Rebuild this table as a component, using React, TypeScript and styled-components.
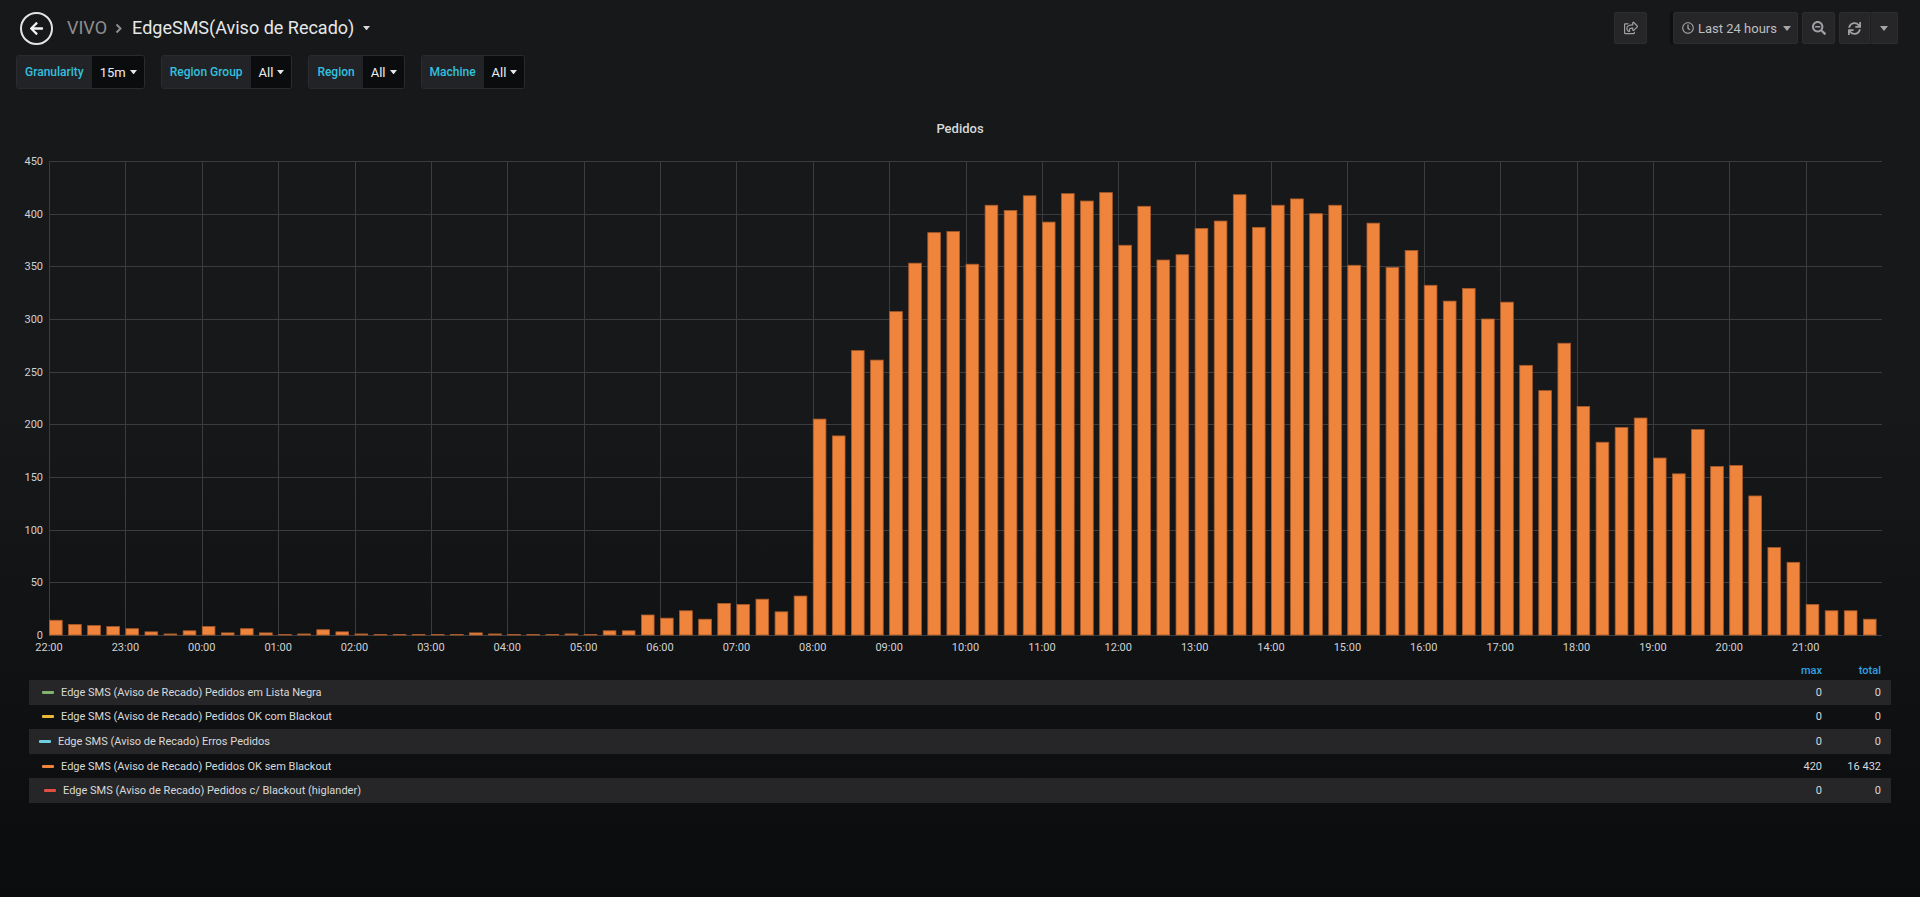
import React from "react";
import styled, { createGlobalStyle } from "styled-components";
import { FaArrowLeft, FaRegShareSquare, FaRegClock, FaSearchMinus, FaSync } from "react-icons/fa";

const GlobalStyle = createGlobalStyle`
  html, body { margin: 0; padding: 0; }
  body {
    min-height: 897px;
    background: linear-gradient(180deg, #17181a 0px, #17181a 400px, #0b0c0e 897px);
    background-repeat: no-repeat;
    background-color: #0b0c0e;
    font-family: Roboto, "Helvetica Neue", Arial, sans-serif;
    color: #d8d9da;
    overflow: hidden;
  }
`;

const Page = styled.div`
  width: 1920px;
  height: 897px;
  display: flex;
  flex-direction: column;
`;

const Navbar = styled.header`
  display: flex;
  align-items: center;
  justify-content: space-between;
  height: 36px;
  padding: 10px 22px 0 20px;
`;

const NavLeft = styled.div`
  display: flex;
  align-items: center;
`;

const BackButton = styled.div`
  width: 29px;
  height: 29px;
  border: 2px solid #e4e4e4;
  border-radius: 50%;
  display: flex;
  align-items: center;
  justify-content: center;
  color: #f2f2f2;
`;

const Breadcrumb = styled.div`
  display: flex;
  align-items: center;
  margin-left: 14px;
  font-size: 18px;
  line-height: 22px;
`;

const Crumb = styled.span`
  color: #8e8e8e;
`;

const CrumbSep = styled.svg`
  width: 7px;
  height: 11px;
  margin: 1px 10px 0 8px;
`;

const DashTitle = styled.span`
  color: #e6e7e8;
`;

const Caret = styled.svg<{ $ml?: number; $w?: number }>`
  flex: none;
  width: ${(p) => p.$w ?? 8}px;
  height: ${(p) => ((p.$w ?? 8) * 5) / 8}px;
  margin-left: ${(p) => p.$ml ?? 5}px;
`;

const NavRight = styled.div`
  display: flex;
  align-items: center;
`;

const NavButton = styled.div<{ $w?: number }>`
  width: ${(p) => p.$w ?? 33}px;
  height: 32px;
  box-sizing: border-box;
  background: #262628;
  border: 1px solid #2c2d30;
  border-radius: 2px;
  display: flex;
  align-items: center;
  justify-content: center;
  color: #9fa0a3;
`;

const ShareButton = styled(NavButton)`
  margin-right: 26px;
`;

const TimePicker = styled(NavButton)`
  width: 125px;
  justify-content: flex-start;
  padding-left: 8px;
  gap: 4px;
  box-shadow: -3px 0 0 0 #0e0f10;
  color: #bdbec0;
  font-size: 13px;
`;

const ButtonGap = styled.div`
  width: 4px;
`;

const SplitGroup = styled.div`
  display: flex;
`;

const SplitButton = styled(NavButton)<{ $left?: boolean }>`
  border-radius: ${(p) => (p.$left ? "2px 0 0 2px" : "0 2px 2px 0")};
  border-left: ${(p) => (p.$left ? "1px solid #2c2d30" : "1px solid #1e1f21")};
`;

const Submenu = styled.div`
  display: flex;
  gap: 16px;
  padding: 9px 16px 0;
`;

const VarBox = styled.div`
  display: flex;
  height: 34px;
  box-sizing: border-box;
  border: 1px solid #2a2b2e;
  border-radius: 3px;
  overflow: hidden;
`;

const VarLabel = styled.div`
  display: flex;
  align-items: center;
  padding: 0 8px;
  background: #222327;
  color: #33c0de;
  font-size: 12px;
  font-weight: 500;
`;

const VarValue = styled.div`
  display: flex;
  align-items: center;
  gap: 4px;
  padding: 0 7px 0 8px;
  background: #0b0c0e;
  color: #eceef0;
  font-size: 13px;
`;

const Panel = styled.section`
  padding: 30px 29px 0;
  display: flex;
  flex-direction: column;
`;

const PanelTitle = styled.div`
  text-align: center;
  font-size: 13px;
  font-weight: 500;
  line-height: 20px;
  color: #d8d9da;
`;

const ChartSvg = styled.svg`
  display: block;
  overflow: visible;
  text {
    font-family: Roboto, "Helvetica Neue", Arial, sans-serif;
    font-size: 11px;
    fill: #d0d1d3;
  }
`;

const Legend = styled.div`
  display: flex;
  flex-direction: column;
  font-size: 11px;
`;

const LegendHeader = styled.div`
  display: flex;
  justify-content: flex-end;
  align-items: center;
  height: 20px;
`;

const HeaderCell = styled.div<{ $last?: boolean }>`
  width: 59px;
  text-align: right;
  padding-right: ${(p) => (p.$last ? 10 : 0)}px;
  color: #2ea3e0;
  font-weight: 500;
`;

const LegendRow = styled.div<{ $odd: boolean }>`
  display: flex;
  align-items: center;
  height: 24.6px;
  background: ${(p) => (p.$odd ? "#262628" : "transparent")};
  color: #d8d9da;
`;

const SeriesName = styled.div<{ $indent: number }>`
  flex: 1;
  display: flex;
  align-items: center;
  padding-left: ${(p) => p.$indent}px;
`;

const Swatch = styled.span<{ $color: string }>`
  width: 12px;
  height: 3px;
  border-radius: 1px;
  background: ${(p) => p.$color};
  margin-right: 7px;
`;

const ValueCell = styled.div<{ $last?: boolean }>`
  width: 59px;
  text-align: right;
  padding-right: ${(p) => (p.$last ? 10 : 0)}px;
`;

const data = [
  14, 10, 9, 8, 6, 3, 1, 4, 8, 2, 6, 2, 0, 1, 5, 3, 1, 0, 0, 0, 0, 0, 2, 1,
  0, 0, 0, 1, 0, 4, 4, 19, 16, 23, 15, 30, 29, 34, 22, 37, 205, 189, 270, 261,
  307, 353, 382, 383, 352, 408, 403, 417, 392, 419, 412, 420, 370, 407, 356, 361,
  386, 393, 418, 387, 408, 414, 400, 408, 351, 391, 349, 365, 332, 317, 329, 300,
  316, 256, 232, 277, 217, 183, 197, 206, 168, 153, 195, 160, 161, 132, 83, 69,
  29, 23, 23, 15,
];

const W = 1862;
const H = 521;
const PL = 20;
const PR = 1853;
const PT = 22;
const PB = 496;
const hourW = (PR - PL) / 24;
const slot = hourW / 4;
const barW = 12.7;
const yUnit = (PB - PT) / 450;

const crisp = (v: number) => Math.round(v) + 0.5;

function Chart() {
  const hours = Array.from({ length: 24 }, (_, h) => h);
  const ticks = Array.from({ length: 10 }, (_, i) => i * 50);
  return (
    <ChartSvg width={W} height={H} viewBox={`0 0 ${W} ${H}`}>
      {ticks.map((v) => {
        const y = crisp(PB - v * yUnit);
        return (
          <g key={`h${v}`}>
            <line x1={PL} x2={PR} y1={y} y2={y} stroke="#3b3c3f" strokeWidth={1} />
            <text x={14} y={y} textAnchor="end" dominantBaseline="central">
              {v}
            </text>
          </g>
        );
      })}
      {hours.map((h) => {
        const x = crisp(PL + h * hourW);
        const label = String((22 + h) % 24).padStart(2, "0") + ":00";
        return (
          <g key={`v${h}`}>
            <line x1={x} x2={x} y1={PT} y2={PB} stroke="#3b3c3f" strokeWidth={1} />
            <text x={PL + h * hourW} y={PB + 12} textAnchor="middle" dominantBaseline="central">
              {label}
            </text>
          </g>
        );
      })}
      {data.map((v, i) => {
        const x = PL + i * slot + 0.5;
        const h = Math.max(v * yUnit, 0.6);
        return (
          <rect
            key={`b${i}`}
            x={x}
            y={PB - h}
            width={barW}
            height={h}
            fill="#ef843c"
            stroke="#a95a2a"
            strokeWidth={0.8}
          />
        );
      })}
    </ChartSvg>
  );
}

const CaretIcon = ({ ml, w, color = "#e6e7e8" }: { ml?: number; w?: number; color?: string }) => (
  <Caret $ml={ml} $w={w} viewBox="0 0 8 5">
    <path d="M0 0 L8 0 L4 5 Z" fill={color} />
  </Caret>
);

const variables = [
  { label: "Granularity", value: "15m" },
  { label: "Region Group", value: "All" },
  { label: "Region", value: "All" },
  { label: "Machine", value: "All" },
];

const series = [
  { name: "Edge SMS (Aviso de Recado) Pedidos em Lista Negra", color: "#7eb26d", indent: 13, max: "0", total: "0" },
  { name: "Edge SMS (Aviso de Recado) Pedidos OK com Blackout", color: "#eab839", indent: 13, max: "0", total: "0" },
  { name: "Edge SMS (Aviso de Recado) Erros Pedidos", color: "#6ed0e0", indent: 10, max: "0", total: "0" },
  { name: "Edge SMS (Aviso de Recado) Pedidos OK sem Blackout", color: "#ef843c", indent: 13, max: "420", total: "16 432" },
  { name: "Edge SMS (Aviso de Recado) Pedidos c/ Blackout (higlander)", color: "#e24d42", indent: 15, max: "0", total: "0" },
];

export default function App() {
  return (
    <>
      <GlobalStyle />
      <Page>
        <Navbar>
          <NavLeft>
            <BackButton>
              <FaArrowLeft size={15} />
            </BackButton>
            <Breadcrumb>
              <Crumb>VIVO</Crumb>
              <CrumbSep viewBox="0 0 7 11">
                <path d="M1.5 1.5 L5.5 5.5 L1.5 9.5" fill="none" stroke="#8e8e8e" strokeWidth={2} />
              </CrumbSep>
              <DashTitle>EdgeSMS(Aviso de Recado)</DashTitle>
              <CaretIcon ml={9} w={7} color="#d8d9da" />
            </Breadcrumb>
          </NavLeft>
          <NavRight>
            <ShareButton>
              <FaRegShareSquare size={14} />
            </ShareButton>
            <TimePicker>
              <FaRegClock size={12} color="#a4a5a7" />
              <span>Last 24 hours</span>
              <CaretIcon ml={2} w={8} color="#a4a5a7" />
            </TimePicker>
            <ButtonGap />
            <NavButton>
              <FaSearchMinus size={14} />
            </NavButton>
            <ButtonGap />
            <SplitGroup>
              <SplitButton $left $w={31}>
                <FaSync size={13} />
              </SplitButton>
              <SplitButton $w={28}>
                <CaretIcon ml={0} w={8} color="#a4a5a7" />
              </SplitButton>
            </SplitGroup>
          </NavRight>
        </Navbar>
        <Submenu>
          {variables.map((v) => (
            <VarBox key={v.label}>
              <VarLabel>{v.label}</VarLabel>
              <VarValue>
                {v.value}
                <CaretIcon ml={0} w={7} />
              </VarValue>
            </VarBox>
          ))}
        </Submenu>
        <Panel>
          <PanelTitle>Pedidos</PanelTitle>
          <Chart />
          <Legend>
            <LegendHeader>
              <HeaderCell>max</HeaderCell>
              <HeaderCell $last>total</HeaderCell>
            </LegendHeader>
            {series.map((s, i) => (
              <LegendRow key={s.name} $odd={i % 2 === 0}>
                <SeriesName $indent={s.indent}>
                  <Swatch $color={s.color} />
                  {s.name}
                </SeriesName>
                <ValueCell>{s.max}</ValueCell>
                <ValueCell $last>{s.total}</ValueCell>
              </LegendRow>
            ))}
          </Legend>
        </Panel>
      </Page>
    </>
  );
}
